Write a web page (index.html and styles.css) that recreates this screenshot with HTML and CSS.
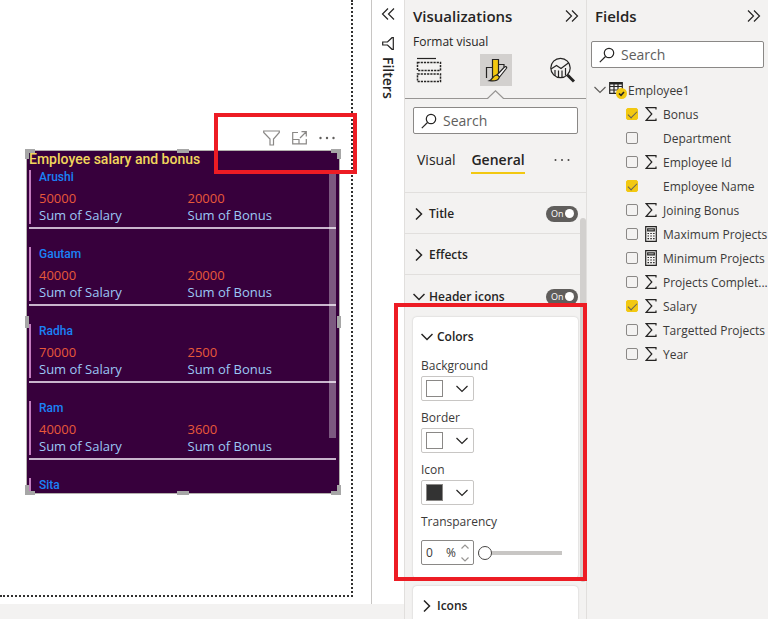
FILE: index.html
```html
<!DOCTYPE html>
<html lang="en">
<head>
    <meta charset="utf-8">
    <title>Employee report</title>
    <link rel="stylesheet" href="styles.css">
</head>
<body>
<svg class="symbols" aria-hidden="true">
    <symbol id="chev-right" viewBox="0 0 12 12"><path d="M3 0.5 L8.5 6 L3 11.5"/></symbol>
    <symbol id="chev-down" viewBox="0 0 12 12"><path d="M0.5 3 L6 8.5 L11.5 3"/></symbol>
    <symbol id="double-right" viewBox="0 0 14 14"><path d="M1 1.5 L6.5 7 L1 12.5 M7 1.5 L12.5 7 L7 12.5"/></symbol>
    <symbol id="search" viewBox="0 0 16 16"><circle cx="10" cy="6" r="4.7"/><path d="M6.5 9.5 L0.8 15.2"/></symbol>
    <symbol id="sigma" viewBox="0 0 12 14"><path d="M11 2.5 V0.7 H1.2 L6.8 7 L1.2 13.3 H11 V11.5"/></symbol>
    <symbol id="calc" viewBox="0 0 12 16"><path d="M0.7 0.7 H11.3 V15.3 H0.7 Z M2.7 2.8 H9.3 V4.8 H2.7 Z"/><path stroke-dasharray="1.5 1.3" d="M2.5 7.5 H10 M2.5 10 H10 M2.5 12.7 H10"/></symbol>
</svg>
<div class="app">
    <main class="workspace">
        <div class="workspace-row">
            <div class="canvas">
                <div class="page">
                    <div class="visual-wrap">
                        <div class="visual-header">
                            <button class="icon-btn" aria-label="Filters on this visual"><svg width="17" height="16" viewBox="0 0 17 16"><path d="M0.7 1 H16.3 V2.5 L10.5 9 V15 H7 V9 L0.7 2.5 Z"/></svg></button>
                            <button class="icon-btn" aria-label="Focus mode"><svg width="15" height="14" viewBox="0 0 15 14"><path d="M6 1.5 H0.7 V12.8 H14.3 V8 M0.7 8.5 H7 V12.8 M8 7 L14 1 M9.5 0.7 H14.3 V5.5"/></svg></button>
                            <button class="icon-btn" aria-label="More options"><svg width="16" height="4" viewBox="0 0 16 4" class="dots"><circle cx="1.5" cy="2" r="1.2"/><circle cx="8" cy="2" r="1.2"/><circle cx="14.5" cy="2" r="1.2"/></svg></button>
                        </div>
                        <section class="visual">
                            <h2 class="visual-title">Employee salary and bonus</h2>
                            <div class="cards">
                                <article class="card"><div class="card-body">
                                    <h3>Arushi</h3>
                                    <dl><div><dd>50000</dd><dt>Sum of Salary</dt></div><div><dd>20000</dd><dt>Sum of Bonus</dt></div></dl>
                                </div></article>
                                <article class="card"><div class="card-body">
                                    <h3>Gautam</h3>
                                    <dl><div><dd>40000</dd><dt>Sum of Salary</dt></div><div><dd>20000</dd><dt>Sum of Bonus</dt></div></dl>
                                </div></article>
                                <article class="card"><div class="card-body">
                                    <h3>Radha</h3>
                                    <dl><div><dd>70000</dd><dt>Sum of Salary</dt></div><div><dd>2500</dd><dt>Sum of Bonus</dt></div></dl>
                                </div></article>
                                <article class="card"><div class="card-body">
                                    <h3>Ram</h3>
                                    <dl><div><dd>40000</dd><dt>Sum of Salary</dt></div><div><dd>3600</dd><dt>Sum of Bonus</dt></div></dl>
                                </div></article>
                                <article class="card last"><div class="card-body">
                                    <h3>Sita</h3>
                                </div></article>
                                <span class="cards-thumb"></span>
                            </div>
                            <span class="handle corner top left"></span>
                            <span class="handle corner top right"></span>
                            <span class="handle corner bottom left"></span>
                            <span class="handle corner bottom right"></span>
                            <span class="handle wide top"></span>
                            <span class="handle wide bottom"></span>
                            <span class="handle tall left"></span>
                            <span class="handle tall right"></span>
                        </section>
                        <span class="callout callout-header"></span>
                    </div>
                </div>
            </div>
            <aside class="filters">
                <button class="icon-btn" aria-label="Expand filters"><svg class="flip" width="14" height="14"><use href="#double-right"/></svg></button>
                <svg class="filters-icon" width="12" height="13" viewBox="0 0 12 13"><path d="M11.3 0.7 V12.3 H10 L5.5 8 H0.7 V5 H5.5 L10 0.7 Z"/></svg>
                <h2>Filters</h2>
            </aside>
        </div>
        <footer class="page-tabs"></footer>
    </main>

    <aside class="pane viz">
        <header class="pane-head">
            <h2>Visualizations</h2>
            <button class="icon-btn" aria-label="Collapse"><svg width="14" height="14"><use href="#double-right"/></svg></button>
        </header>
        <p class="sub">Format visual</p>
        <div class="modes">
            <button class="mode" aria-label="Build visual"><svg width="26" height="26" viewBox="0 0 26 26"><path d="M1 1.5 H20"/><path stroke-width="1.5" stroke-dasharray="2.2 1" d="M1.5 5.5 H24.5 V13.5 H1.5 Z M1.5 17 H24.5 V24.5 H1.5 Z"/></svg></button>
            <button class="mode active" aria-label="Format visual"><svg width="24" height="24" viewBox="0 0 24 24">
                <path d="M2.5 20 V9.5 H8 M15 6.5 H20 V9"/>
                <path fill="#f2c811" d="M8.5 1.5 H14.5 V17 L11 20 H8.5 Z"/>
                <path fill="#fff" d="M21.5 8.5 C22.8 8.5 23 9.5 22.3 10.5 L15.5 19 L13 17 L20 9.5 Z"/>
                <path fill="#f2c811" d="M12.5 17 C14 17 15.5 18.5 15 20 C13.5 23 9.5 23.3 5.5 22.7 C8.5 21.5 9 17.5 12.5 17 Z"/>
            </svg></button>
            <button class="mode" aria-label="Analytics"><svg width="26" height="26" viewBox="0 0 26 26"><circle cx="11.5" cy="11" r="9.7"/><path d="M2 12 L7.5 8.5 L12 11.5 L20 5.5 M6 19 V13 M9.5 20.5 V13.5 M13 20.5 V13.5 M16.5 18.5 V11"/><path stroke-width="3" d="M18.5 18 L25 24.5"/></svg></button>
        </div>
        <svg class="pointer" viewBox="0 0 182 9" preserveAspectRatio="xMidYMid slice"><path d="M-400 8.5 H83 L91 0.8 L99 8.5 H600"/></svg>
        <div class="search">
            <svg width="16" height="16"><use href="#search"/></svg>
            <input type="text" placeholder="Search" aria-label="Search format options">
        </div>
        <nav class="tabs">
            <button>Visual</button>
            <button class="active">General</button>
            <button class="more" aria-label="More"><svg width="16" height="4" viewBox="0 0 16 4" class="dots"><circle cx="1.5" cy="2" r="1"/><circle cx="8" cy="2" r="1"/><circle cx="14.5" cy="2" r="1"/></svg></button>
        </nav>
        <div class="sections">
            <div class="section">
                <button class="section-btn"><svg width="12" height="12"><use href="#chev-right"/></svg>Title</button>
                <label class="toggle">On<input type="checkbox" checked></label>
            </div>
            <div class="section">
                <button class="section-btn"><svg width="12" height="12"><use href="#chev-right"/></svg>Effects</button>
            </div>
            <div class="section open">
                <button class="section-btn"><svg width="12" height="12"><use href="#chev-down"/></svg>Header icons</button>
                <label class="toggle">On<input type="checkbox" checked></label>
            </div>
            <div class="group">
                <button class="section-btn"><svg width="12" height="12"><use href="#chev-down"/></svg>Colors</button>
                <div class="field">
                    <label for="bg">Background</label>
                    <div class="picker"><span class="swatch"></span><svg width="12" height="12"><use href="#chev-down"/></svg><select id="bg"><option value="white"></option></select></div>
                </div>
                <div class="field">
                    <label for="border">Border</label>
                    <div class="picker"><span class="swatch"></span><svg width="12" height="12"><use href="#chev-down"/></svg><select id="border"><option value="white"></option></select></div>
                </div>
                <div class="field">
                    <label for="icon">Icon</label>
                    <div class="picker"><span class="swatch dark"></span><svg width="12" height="12"><use href="#chev-down"/></svg><select id="icon"><option value="dark"></option></select></div>
                </div>
                <div class="field transparency">
                    <label for="transparency">Transparency</label>
                    <div class="slider-row">
                        <div class="percent">
                            <input type="text" id="transparency" value="0">
                            <span>%</span>
                            <svg width="8" height="18" viewBox="0 0 8 18"><path d="M0.5 4.5 L4 1 L7.5 4.5 M0.5 13.5 L4 17 L7.5 13.5"/></svg>
                        </div>
                        <input type="range" min="0" max="100" value="0" aria-label="Transparency">
                    </div>
                </div>
                <span class="callout callout-colors"></span>
            </div>
            <div class="group">
                <button class="section-btn"><svg width="12" height="12"><use href="#chev-right"/></svg>Icons</button>
            </div>
            <span class="scroll-thumb"></span>
        </div>
    </aside>

    <aside class="pane fields">
        <header class="pane-head">
            <h2>Fields</h2>
            <button class="icon-btn" aria-label="Collapse"><svg width="14" height="14"><use href="#double-right"/></svg></button>
        </header>
        <div class="search">
            <svg width="16" height="16"><use href="#search"/></svg>
            <input type="text" placeholder="Search" aria-label="Search fields">
        </div>
        <div class="table-name">
            <svg width="12" height="12"><use href="#chev-down"/></svg>
            <svg width="18" height="18" viewBox="0 0 18 18">
                <path d="M0.7 1.7 H13.3 V12.3 H0.7 Z M0.7 5.5 H13.3 M0.7 9 H13.3 M5 3 V12 M9 3 V12"/><path stroke-width="2" d="M1 2.5 H13"/>
                <circle cx="12.5" cy="12.5" r="5.5" fill="#f2c811" stroke="none"/><path stroke-width="1.6" d="M10 12.5 L12 14.3 L15 11"/>
            </svg>
            <span>Employee1</span>
        </div>
        <ul>
            <li><label><input type="checkbox" checked><svg class="type" width="12" height="14"><use href="#sigma"/></svg><span>Bonus</span></label></li>
            <li><label><input type="checkbox"><i class="type"></i><span>Department</span></label></li>
            <li><label><input type="checkbox"><svg class="type" width="12" height="14"><use href="#sigma"/></svg><span>Employee Id</span></label></li>
            <li><label><input type="checkbox" checked><i class="type"></i><span>Employee Name</span></label></li>
            <li><label><input type="checkbox"><svg class="type" width="12" height="14"><use href="#sigma"/></svg><span>Joining Bonus</span></label></li>
            <li><label><input type="checkbox"><svg class="type" width="12" height="16"><use href="#calc"/></svg><span>Maximum Projects</span></label></li>
            <li><label><input type="checkbox"><svg class="type" width="12" height="16"><use href="#calc"/></svg><span>Minimum Projects</span></label></li>
            <li><label><input type="checkbox"><svg class="type" width="12" height="14"><use href="#sigma"/></svg><span>Projects Complet...</span></label></li>
            <li><label><input type="checkbox" checked><svg class="type" width="12" height="14"><use href="#sigma"/></svg><span>Salary</span></label></li>
            <li><label><input type="checkbox"><svg class="type" width="12" height="14"><use href="#sigma"/></svg><span>Targetted Projects</span></label></li>
            <li><label><input type="checkbox"><svg class="type" width="12" height="14"><use href="#sigma"/></svg><span>Year</span></label></li>
        </ul>
    </aside>
</div>
</body>
</html>
```

FILE: styles.css
```css
* {
    box-sizing: border-box;
}

body {
    margin: 0;
    font-family: "Open Sans", "Noto Sans", sans-serif;
    font-size: 12px;
    color: #252423;
    background: #f3f2f1;
}

h2, h3, p, dl, dd, ul {
    margin: 0;
    padding: 0;
}

button, input, select {
    font: inherit;
    color: inherit;
    margin: 0;
    padding: 0;
    border: none;
    background: none;
}

svg {
    fill: none;
    stroke: #252423;
    stroke-width: 1.2;
    flex-shrink: 0;
}

.symbols {
    position: absolute;
    width: 0;
    height: 0;
}

.dots {
    fill: #484644;
    stroke: none;
}

.flip {
    transform: scaleX(-1);
}

.icon-btn {
    display: flex;
}

.app {
    display: flex;
    height: 100vh;
    overflow: hidden;
}

/* report canvas */
.workspace {
    flex: 1;
    display: flex;
    flex-direction: column;
    min-width: 0;
}

.workspace-row {
    flex: 1;
    display: flex;
    background: #fff;
}

.page-tabs {
    height: 15px;
    background: #f3f2f1;
}

.canvas {
    flex: 1;
    display: flex;
    padding: 0 18px 7px 0;
}

.page {
    flex: 1;
    padding: 130px 11px 0 26px;
    border-right: 2px dotted #323130;
    border-bottom: 2px dotted #323130;
}

.visual-wrap {
    position: relative;
}

.visual-header {
    display: flex;
    justify-content: flex-end;
    align-items: center;
    gap: 12px;
    height: 16px;
    margin-bottom: 4px;
    padding-right: 5px;
}

.visual-header svg {
    stroke: #8a8886;
}

.visual-header .dots {
    fill: #605e5c;
    stroke: none;
}

.visual {
    position: relative;
    height: 344px;
    padding: 0 3px 0 2px;
    border: 1px solid #b3b0ad;
    background: #37003c;
}

.visual-title {
    margin-bottom: 2px;
    font: 500 14px/17px Roboto, sans-serif;
    color: #f2d65c;
}

.cards {
    position: relative;
}

.card {
    margin-bottom: 18px;
    padding-bottom: 3px;
    border-bottom: 2px solid #c8b4cc;
}

.card.last {
    padding: 0;
    border: none;
}

.card-body {
    padding-left: 8px;
    border-left: 2px solid #c57cc0;
}

.card h3 {
    font: 500 12px/14px Roboto, sans-serif;
    color: #1a82f7;
}

.card dl {
    display: grid;
    grid-template-columns: 1fr 1fr;
    padding-top: 6px;
    font-size: 13px;
    line-height: 17px;
}

.card dl div {
    display: flex;
    flex-direction: column;
}

.card dd {
    color: #e8593a;
}

.card dt {
    color: #9cc8f5;
}

.cards-thumb {
    position: absolute;
    top: 0;
    right: 0;
    width: 7px;
    height: 268px;
    background: rgba(255, 255, 255, 0.35);
}

.handle {
    position: absolute;
    border: 0 solid #a6a6a6;
}

.corner {
    width: 10px;
    height: 10px;
}

.wide {
    left: 50%;
    width: 12px;
    height: 4px;
    margin-left: -6px;
    background: #a6a6a6;
}

.tall {
    width: 4px;
    height: 12px;
    margin-top: -6px;
    background: #a6a6a6;
}

.top { top: -2px; }
.bottom { bottom: -2px; }
.left { left: -2px; }
.right { right: -2px; }
.tall.left, .tall.right { top: 50%; }
.corner.top { border-top-width: 4px; }
.corner.bottom { border-bottom-width: 4px; }
.corner.left { border-left-width: 4px; }
.corner.right { border-right-width: 4px; }

.callout {
    position: absolute;
    border: 4px solid #ed1c24;
    pointer-events: none;
}

.callout-header {
    top: -17px;
    right: -17px;
    width: 143px;
    height: 61px;
}

.callout-colors {
    top: -14px;
    right: -9px;
    bottom: -3px;
    left: -19px;
    z-index: 2;
}

/* filters strip */
.filters {
    display: flex;
    flex-direction: column;
    align-items: center;
    width: 33px;
    padding-top: 7px;
    border-left: 1px solid #c8c6c4;
}

.filters-icon {
    margin: 16px 0 7px;
}

.filters h2 {
    writing-mode: vertical-rl;
    font-size: 14px;
    font-weight: 600;
    line-height: 18px;
}

/* side panes */
.pane {
    width: 182px;
    border-left: 1px solid #e1dfdd;
}

.pane-head {
    display: flex;
    justify-content: space-between;
    align-items: center;
    height: 32px;
    padding: 0 7px 0 8px;
}

.pane-head h2 {
    font-size: 15px;
    font-weight: 600;
}

.sub {
    padding-left: 8px;
    line-height: 20px;
}

.modes {
    display: flex;
    justify-content: space-between;
    padding: 2px 8px 0;
}

.mode {
    display: flex;
    align-items: center;
    justify-content: center;
    width: 32px;
    height: 32px;
}

.mode.active {
    background: #d2d0ce;
}

.pointer {
    display: block;
    width: 100%;
    height: 9px;
    margin-top: 4px;
    stroke: #979593;
}

.search {
    display: flex;
    align-items: center;
    gap: 6px;
    height: 27px;
    margin: 8px 8px 0;
    padding: 0 7px;
    border: 1px solid #8a8886;
    border-radius: 2px;
    background: #fff;
}

.search input {
    flex: 1;
    min-width: 0;
    font-size: 14px;
}

.search input::placeholder {
    color: #605e5c;
    opacity: 1;
}

.tabs {
    display: flex;
    gap: 16px;
    height: 58px;
    padding: 14px 8px 0 12px;
    font-size: 14px;
}

.tabs button {
    height: 26px;
    border-bottom: 2px solid transparent;
    line-height: 22px;
}

.tabs .active {
    border-color: #f2c811;
    font-weight: 600;
}

.tabs .more {
    display: flex;
    align-items: center;
    margin-right: 8px;
    margin-left: auto;
}

.sections {
    position: relative;
    border-top: 1px solid #e1dfdd;
}

.section {
    display: flex;
    justify-content: space-between;
    align-items: center;
    height: 41px;
    padding: 1px 8px 0;
    border-bottom: 1px solid #e1dfdd;
}

.section.open {
    height: 42px;
    border: none;
}

.section-btn {
    display: flex;
    align-items: center;
    gap: 4px;
    font-weight: 600;
}

.section-btn svg {
    stroke-width: 1.5;
}

.toggle {
    display: flex;
    align-items: center;
    justify-content: space-between;
    width: 32px;
    height: 16px;
    padding: 0 4px 0 5px;
    border-radius: 8px;
    background: #605e5c;
    color: #fff;
    font-size: 9px;
}

.toggle input {
    appearance: none;
    width: 9px;
    height: 9px;
    border-radius: 50%;
    background: #fff;
}

.group {
    position: relative;
    margin: 0 8px 8px;
    padding: 0 8px 13px;
    border-radius: 4px;
    background: #fff;
    box-shadow: 0 0 2px rgba(0, 0, 0, 0.2);
}

.group .section-btn {
    height: 39px;
}

.field {
    margin-bottom: 7px;
}

.field label {
    display: block;
    line-height: 20px;
    color: #3b3a39;
}

.picker {
    position: relative;
    display: flex;
    align-items: center;
    justify-content: space-between;
    width: 53px;
    height: 25px;
    padding: 0 5px 0 4px;
    border: 1px solid #c8c6c4;
    border-radius: 2px;
}

.picker select {
    position: absolute;
    inset: 0;
    width: 100%;
    appearance: none;
}

.swatch {
    width: 17px;
    height: 17px;
    border: 1px solid #8a8886;
    background: #fff;
}

.swatch.dark {
    background: #333;
}

.transparency {
    margin: 0;
}

.slider-row {
    display: flex;
    align-items: center;
    gap: 4px;
    padding: 8px 8px 0 0;
}

.percent {
    display: flex;
    align-items: center;
    width: 53px;
    height: 25px;
    padding: 0 4px;
    border: 1px solid #8a8886;
    border-radius: 2px;
    color: #3b3a39;
}

.percent input {
    width: 20px;
}

.percent svg {
    margin-left: auto;
    stroke: #979593;
}

input[type="range"] {
    flex: 1;
    min-width: 0;
    appearance: none;
}

input[type="range"]::-webkit-slider-runnable-track {
    height: 4px;
    background: #c8c6c4;
}

input[type="range"]::-webkit-slider-thumb {
    appearance: none;
    width: 14px;
    height: 14px;
    margin-top: -5px;
    border: 1px solid #484644;
    border-radius: 50%;
    background: #fff;
}

.scroll-thumb {
    position: absolute;
    top: 25px;
    right: 0;
    width: 6px;
    height: 364px;
    border-radius: 3px;
    background: #d2d0ce;
}

/* fields */
.fields .search {
    margin: 9px 4px 0;
}

.table-name {
    display: flex;
    align-items: center;
    height: 24px;
    margin-top: 10px;
    padding-left: 7px;
    color: #3b3a39;
}

.table-name svg:first-child {
    margin-right: 3px;
    stroke: #605e5c;
}

.table-name span {
    margin-left: 1px;
}

.fields ul {
    list-style: none;
}

.fields li label {
    display: flex;
    align-items: center;
    height: 24px;
    padding-left: 39px;
    color: #3b3a39;
    white-space: nowrap;
}

.fields li input {
    appearance: none;
    width: 12px;
    height: 12px;
    border: 1px solid #8a8886;
    border-radius: 2px;
}

.fields li input:checked {
    display: flex;
    justify-content: center;
    border-color: #f2c811;
    background: #f2c811;
}

.fields li input:checked::before {
    content: "";
    width: 4px;
    height: 8px;
    border: solid #605e5c;
    border-width: 0 1px 1px 0;
    transform: rotate(45deg);
}

.type {
    width: 12px;
    margin: 0 6px 0 7px;
}
```
